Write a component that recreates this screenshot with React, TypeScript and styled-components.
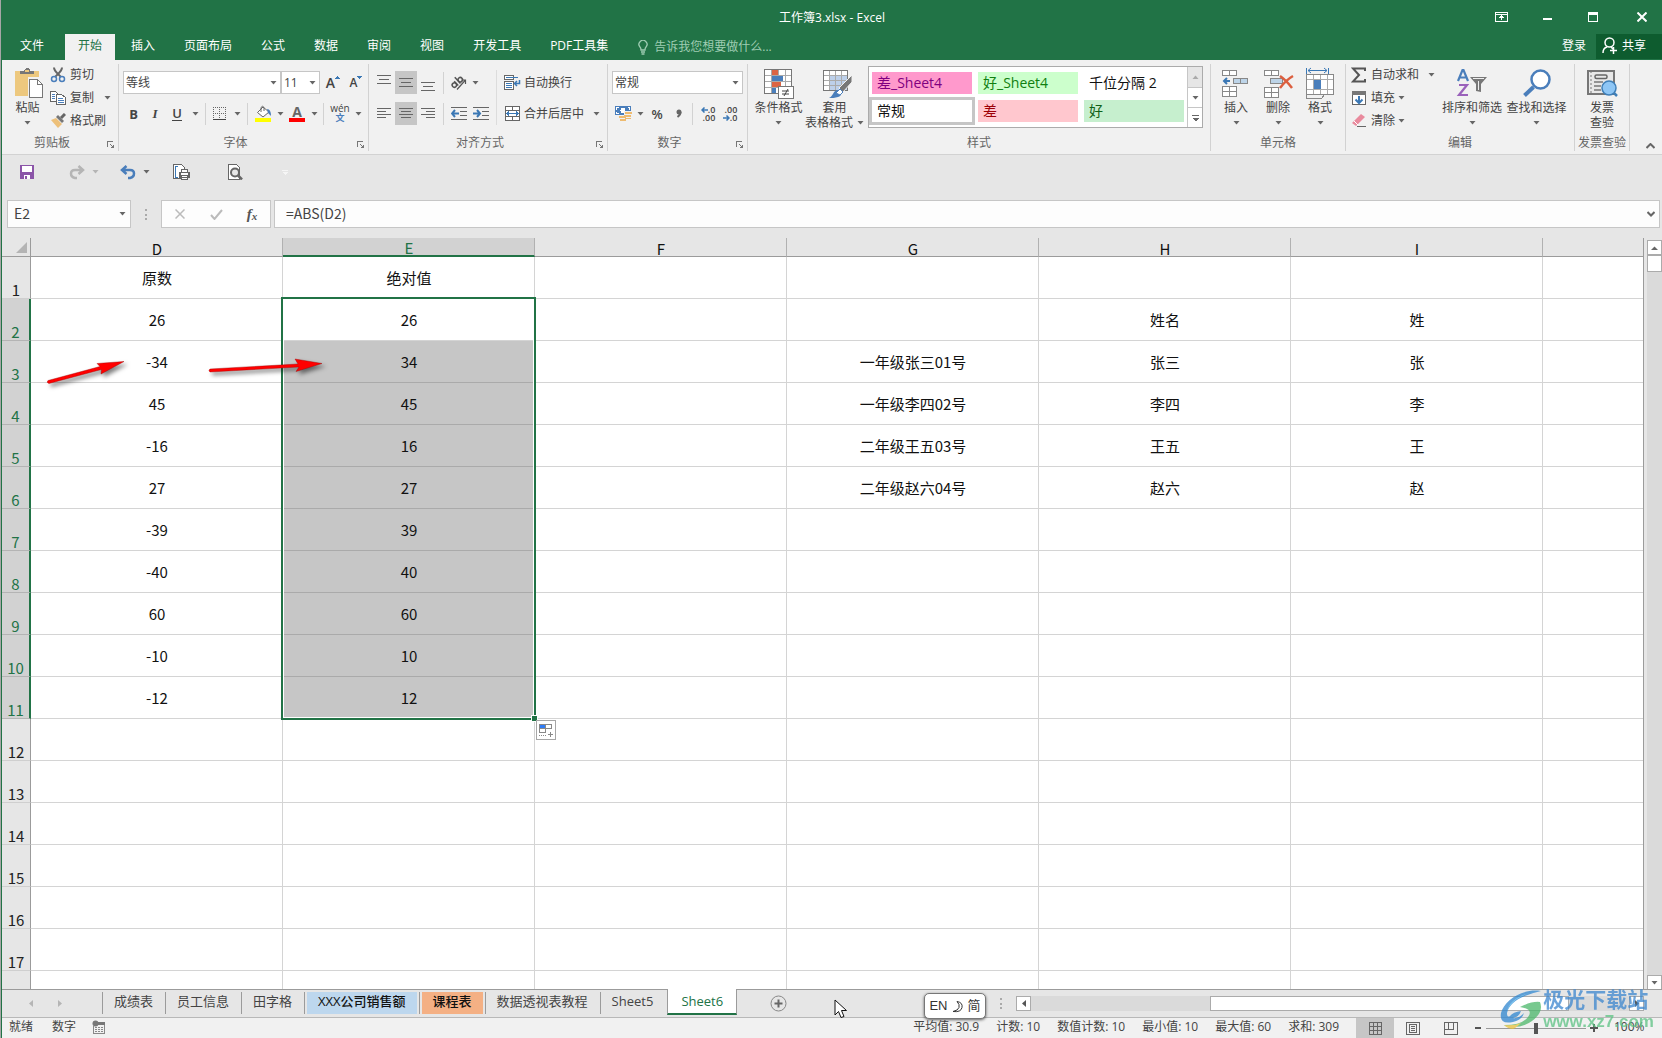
import React from "react";
import styled, { createGlobalStyle, css } from "styled-components";

const GREEN = "#217346";
const UI_FONT = '"Open Sans", "Noto Sans CJK SC", sans-serif';
const CELL_FONT = '"Noto Sans CJK SC", sans-serif';

const GlobalStyle = createGlobalStyle`
  * { box-sizing: border-box; }
  html, body, #root { height: 100%; margin: 0; }
  body { font: 12px/16px ${UI_FONT}; color: #444; overflow: hidden; }
  button, input, select { font: inherit; color: inherit; margin: 0; padding: 0; border: 0; background: none; border-radius: 0; }
  button { display: inline-flex; align-items: center; justify-content: center; white-space: nowrap; }
  svg { display: block; flex: none; }
`;

const Frame = styled.div`
  height: 100vh;
  border-left: 1px solid #a6a6a6;
`;
const Workbook = styled.div`
  height: 100%;
  display: flex;
  flex-direction: column;
  border-left: 1px solid ${GREEN};
  background: #e6e6e6;
  position: relative;
`;

/* ---------- title and tabs ---------- */
const TitleBar = styled.header`
  display: grid;
  grid-template-columns: 1fr auto 1fr;
  align-items: center;
  height: 34px;
  background: ${GREEN};
  color: #fff;
`;
const Title = styled.h1`
  grid-column: 2;
  margin: 0;
  padding-top: 2px;
  font-size: 12px;
  font-weight: 400;
`;
const WindowButtons = styled.div`
  display: flex;
  justify-content: flex-end;
`;
const WindowButton = styled.button`
  width: 46px;
  height: 32px;
  &:last-child { padding-left: 6px; }
`;
const TabBar = styled.nav`
  display: flex;
  align-items: flex-start;
  gap: 3px;
  height: 26px;
  background: ${GREEN};
  color: #fff;
`;
const RibbonTab = styled.button<{ $active?: boolean; $file?: boolean }>`
  height: 26px;
  padding: 0 ${(p) => (p.$file ? 18 : 13)}px 2px;
  ${(p) => p.$active && css`background: #f1f1f1; color: ${GREEN};`}
`;
const TellMe = styled.button`
  height: 26px;
  padding: 0 0 0 14px;
  gap: 6px;
  color: #9fcdb3;
`;
const Login = styled.button`
  height: 26px;
  margin-left: auto;
  padding: 0 7px 2px;
`;
const Share = styled.button`
  height: 25px;
  width: 66px;
  gap: 4px;
  padding: 0 10px 2px 0;
  background: #0e5c2f;
`;

/* ---------- ribbon ---------- */
const Ribbon = styled.section`
  display: flex;
  height: 95px;
  background: #f1f1f1;
  border-bottom: 1px solid #d2d2d2;
`;
const Group = styled.section<{ $w: number }>`
  display: flex;
  flex: none;
  flex-direction: column;
  width: ${(p) => p.$w}px;
  margin: 4px 0 3px;
  border-right: 1px solid #d2d2d2;
`;
const GroupBody = styled.div`
  display: flex;
  flex: 1;
  min-height: 0;
  padding: 0 4px;
`;
const GroupFooter = styled.div`
  display: flex;
  align-items: center;
  height: 16px;
  color: #666;
`;
const GroupLabel = styled.div`
  flex: 1;
  text-align: center;
  white-space: nowrap;
`;
const Launcher = styled.button`
  width: 16px;
  height: 16px;
  justify-content: flex-end;
  padding: 4px 3px 0 0;
`;
const BigButton = styled.button<{ $w: number }>`
  width: ${(p) => p.$w}px;
  flex: none;
  flex-direction: column;
  justify-content: flex-start;
  align-self: flex-start;
  padding-top: 2px;
  line-height: 15px;
`;
const BigIcon = styled.span`
  display: flex;
  align-items: center;
  justify-content: center;
  height: 34px;
`;
const BigArrow = styled.span`
  display: flex;
  align-items: center;
  height: 15px;
  gap: 4px;
`;
const Stack = styled.div<{ $w?: number }>`
  display: flex;
  flex-direction: column;
  width: ${(p) => (p.$w ? p.$w + "px" : "auto")};
`;
const SmallButton = styled.button`
  height: 23px;
  gap: 3px;
  padding-bottom: 2px;
  justify-content: flex-start;
`;
const IconSlot = styled.span<{ $w?: number }>`
  display: flex;
  justify-content: center;
  width: ${(p) => p.$w ?? 16}px;
`;
const ArrowSlot = styled.span<{ $gap: number }>`
  margin-left: ${(p) => p.$gap}px;
`;
const ToolRows = styled.div`
  display: flex;
  flex-direction: column;
  gap: 8px;
  padding-top: 7px;
`;
const ToolRow = styled.div`
  display: flex;
  align-items: center;
  height: 23px;
`;
const Tool = styled.button<{ $w: number; $on?: boolean }>`
  width: ${(p) => p.$w}px;
  height: 23px;
  flex: none;
  background: ${(p) => (p.$on ? "#c6c6c6" : "transparent")};
`;
const TextTool = styled.button`
  height: 23px;
  gap: 3px;
  white-space: nowrap;
`;
const Divider = styled.span<{ $h?: number; $m?: number }>`
  width: 1px;
  height: ${(p) => p.$h ?? 22}px;
  flex: none;
  margin: 0 ${(p) => p.$m ?? 3}px;
  background: #d2d2d2;
`;
const TallDivider = styled.span`
  width: 1px;
  height: 55px;
  margin: 6px 7px 0 4px;
  background: #dcdcdc;
`;
const Combo = styled.label<{ $w: number }>`
  display: grid;
  grid-template-columns: 1fr 14px;
  align-items: center;
  width: ${(p) => p.$w}px;
  height: 23px;
  background: #fff;
  border: 1px solid #c6c6c6;
  select {
    grid-area: 1 / 1 / 2 / 3;
    appearance: none;
    padding-left: 2px;
    height: 21px;
    outline: none;
  }
  svg { grid-area: 1 / 2; pointer-events: none; justify-self: center; }
`;
const Letter = styled.span<{ $b?: boolean; $i?: boolean; $u?: boolean }>`
  font-size: 13px;
  line-height: 14px;
  font-weight: ${(p) => (p.$b ? 700 : 600)};
  font-style: ${(p) => (p.$i ? "italic" : "normal")};
  font-family: ${(p) => (p.$i ? '"Liberation Serif", serif' : UI_FONT)};
  border-bottom: ${(p) => (p.$u ? "1px solid #444" : "0")};
`;
const FontColor = styled.span`
  width: 16px;
  height: 17px;
  border-bottom: 4px solid #f00;
  font-size: 14px;
  font-weight: 700;
  line-height: 13px;
  text-align: center;
  color: #666;
`;
const GrowShrink = styled.span<{ $s: number }>`
  font-size: ${(p) => p.$s}px;
  font-weight: 600;
  line-height: 16px;
`;
const Wen = styled.span`
  display: flex;
  flex-direction: column;
  align-items: center;
  font-size: 10px;
  line-height: 9px;
  b { font-size: 9px; line-height: 10px; color: #4a7ebb; }
`;
const Decimal = styled.span`
  display: grid;
  font-size: 9px;
  font-weight: 600;
  line-height: 8px;
  justify-items: end;
  span { display: flex; align-items: center; }
`;
const FxText = styled.i`
  font: italic 700 15px/16px "Liberation Serif", serif;
  color: #555;
  sub { font-size: 11px; line-height: 8px; vertical-align: -1px; }
`;

/* ---------- style gallery ---------- */
const Gallery = styled.div`
  display: flex;
  height: 62px;
  margin: 2px 0 0 4px;
  background: #fff;
  border: 1px solid #ababab;
`;
const Swatches = styled.div`
  display: grid;
  grid-template-columns: repeat(3, 100px);
  grid-auto-rows: 22px;
  gap: 6px;
  padding: 5px 3px;
`;
const Swatch = styled.button<{ $bg: string; $fg: string; $on?: boolean }>`
  justify-content: flex-start;
  padding: 0 5px 1px;
  font-size: 14px;
  line-height: 20px;
  background: ${(p) => p.$bg};
  color: ${(p) => p.$fg};
  box-shadow: ${(p) => (p.$on ? "0 0 0 3px #c6c6c6" : "none")};
`;
const GalleryScroll = styled.div`
  display: grid;
  grid-template-rows: 1fr 1fr 1fr;
  width: 15px;
  margin-left: auto;
  border-left: 1px solid #c6c6c6;
  button + button { border-top: 1px solid #c6c6c6; }
  button:first-child { background: #e6e6e6; }
`;
const Collapse = styled.button`
  margin: auto 4px 2px auto;
  width: 16px;
  height: 12px;
`;

/* ---------- quick access and formula ---------- */
const QuickBar = styled.div`
  display: flex;
  align-items: center;
  height: 34px;
  margin-bottom: 11px;
  padding-left: 14px;
`;
const Quick = styled.button<{ $w: number; $before?: number }>`
  width: ${(p) => p.$w}px;
  height: 24px;
  margin-left: ${(p) => p.$before ?? 0}px;
`;
const FormulaBar = styled.div`
  display: flex;
  height: 28px;
  margin: 0 2px 10px 5px;
  font: 14px/20px ${CELL_FONT};
`;
const Box = styled.div<{ $w?: number }>`
  display: flex;
  align-items: center;
  height: 28px;
  ${(p) => (p.$w ? `width: ${p.$w}px;` : "flex: 1;")}
  background: #fdfdfd;
  border: 1px solid #c6c6c6;
  input {
    flex: 1;
    min-width: 0;
    height: 26px;
    padding: 0 6px 2px;
    outline: none;
  }
`;
const FormulaBox = styled(Box)`
  margin-left: 3px;
  input { padding-left: 11px; }
`;
const Grip = styled.span`
  display: flex;
  align-items: center;
  justify-content: center;
  width: 30px;
`;
const Narrow = styled.button<{ $w: number }>`
  width: ${(p) => p.$w}px;
  height: 24px;
`;

/* ---------- sheet ---------- */
const SheetArea = styled.main`
  display: flex;
  flex: 1;
  min-height: 0;
`;
const Viewport = styled.div`
  position: relative;
  flex: 1;
  min-width: 0;
  overflow: hidden;
  border-right: 1px solid #9b9b9b;
`;
const Grid = styled.table`
  width: 100%;
  table-layout: fixed;
  border-collapse: separate;
  border-spacing: 0;
  font: 15px/20px ${CELL_FONT};
  color: #111;
  col:first-child { width: 29px; }
  col.data { width: 252px; }
`;
const Corner = styled.td`
  height: 19px;
  padding: 0;
  background: #e6e6e6;
  border-right: 1px solid #9b9b9b;
  border-bottom: 1px solid #9b9b9b;
  svg { margin: 0 0 0 auto; }
`;
const ColHead = styled.th<{ $on?: boolean }>`
  height: 19px;
  padding: 2px 0 0 1px;
  font-weight: 400;
  line-height: 15px;
  background: ${(p) => (p.$on ? "#d2d2d2" : "#e6e6e6")};
  color: ${(p) => (p.$on ? GREEN : "#111")};
  border-right: 1px solid #b1b1b1;
  border-bottom: ${(p) => (p.$on ? `2px solid ${GREEN}` : "1px solid #9b9b9b")};
  &:last-child { border-right: 0; }
`;
const RowHead = styled.th<{ $on?: boolean }>`
  height: 42px;
  padding: 0;
  vertical-align: bottom;
  font-weight: 400;
  line-height: 16px;
  background: ${(p) => (p.$on ? "#d2d2d2" : "#e6e6e6")};
  color: ${(p) => (p.$on ? GREEN : "#222")};
  border-bottom: 1px solid ${(p) => (p.$on ? "#b4b4b4" : "#cfcfcf")};
  border-right: ${(p) => (p.$on ? `2px solid ${GREEN}` : "1px solid #9b9b9b")};
`;
const Cell = styled.td<{ $fill?: boolean }>`
  position: relative;
  height: 42px;
  padding: 0 0 0 1px;
  text-align: center;
  background: ${(p) => (p.$fill ? "#c6c6c6" : "#fff")};
  border-right: 1px solid #d4d4d4;
  border-bottom: 1px solid ${(p) => (p.$fill ? "#aaa" : "#d4d4d4")};
  &:last-child { border-right: 0; }
`;
const Selection = styled.div`
  position: absolute;
  z-index: 1;
  left: -2px;
  top: -2px;
  width: 255px;
  height: 423px;
  border: 2px solid ${GREEN};
  box-shadow: inset 0 0 0 1px #fff;
`;
const FillHandle = styled.span`
  position: absolute;
  right: -4px;
  bottom: -4px;
  width: 7px;
  height: 7px;
  background: ${GREEN};
  border: 1px solid #fff;
`;
const FillOptions = styled.button`
  position: absolute;
  left: 253px;
  top: 421px;
  z-index: 2;
  width: 20px;
  height: 20px;
  background: #fff;
  border: 1px solid #a6a6a6;
`;
const ArrowLayer = styled.svg`
  position: absolute;
  left: 0;
  top: 100px;
  z-index: 3;
  filter: drop-shadow(3px 3px 2px rgba(0, 0, 0, 0.5));
`;
const VScroll = styled.div`
  display: flex;
  flex-direction: column;
  width: 15px;
  margin: 2px 0 -1px 3px;
  background: #dadada;
`;
const ScrollButton = styled.button`
  width: 15px;
  height: 15px;
  flex: none;
  background: #fff;
  border: 1px solid #ababab;
`;
const VThumb = styled.div`
  height: 17px;
  margin-bottom: auto;
  background: #fff;
  border: 1px solid #ababab;
`;

/* ---------- sheet tabs ---------- */
const SheetBar = styled.div`
  display: flex;
  height: 29px;
  border-top: 1px solid #9b9b9b;
  border-bottom: 1px solid #b8b8b8;
  font-size: 13px;
`;
const SheetNav = styled.div`
  display: flex;
  align-items: flex-start;
  width: 100px;
  flex: none;
  padding: 4px 0 0 14px;
  button { width: 29px; height: 18px; }
`;
const SheetTab = styled.button<{ $bg?: string; $active?: boolean }>`
  height: 22px;
  margin-top: 2px;
  padding: 0 12px 4px 11px;
  border-left: 1px solid #9b9b9b;
  ${(p) =>
    p.$bg &&
    css`
      padding: 0 2px;
      span { background: ${p.$bg}; color: #111; font-weight: 500; height: 22px; padding: 0 11px; line-height: 18px; }
    `}
  ${(p) =>
    p.$active &&
    css`
      height: 26px;
      margin-top: -1px;
      margin-left: 2px;
      padding: 0 13px 1px;
      background: #fff;
      color: ${GREEN};
      border-right: 1px solid #9b9b9b;
      border-bottom: 2px solid ${GREEN};
    `}
`;
const AddSheet = styled.button`
  width: 20px;
  height: 20px;
  margin: 3px 0 0 31px;
`;
const HScroll = styled.div`
  display: flex;
  align-items: center;
  width: 628px;
  height: 15px;
  margin: 6px 18px 0 auto;
  background: #dadada;
`;
const HTrack = styled.div`
  display: flex;
  flex: 1;
`;
const HThumb = styled.div`
  width: 60%;
  height: 15px;
  margin-left: 30%;
  background: #fff;
  border: 1px solid #ababab;
`;
const BarGrip = styled.span`
  margin: 8px 0 0 auto;
  & + div { margin-left: 14px; }
`;
const StatusBar = styled.footer`
  display: flex;
  align-items: flex-start;
  height: 20px;
  padding-left: 7px;
  background: #f1f1f1;
  line-height: 18px;
  white-space: nowrap;
`;
const StatusText = styled.span<{ $gap: number }>`
  margin-right: ${(p) => p.$gap}px;
`;
const StatusRight = styled.div`
  display: flex;
  height: 20px;
  margin-left: auto;
`;
const ViewButton = styled.button<{ $on?: boolean }>`
  width: 38px;
  height: 20px;
  background: ${(p) => (p.$on ? "#c6c6c6" : "transparent")};
`;
const ZoomButton = styled.button`
  width: 16px;
  height: 20px;
`;
const Slider = styled.input`
  appearance: none;
  width: 100px;
  height: 20px;
  background: linear-gradient(#999, #999) center / 100% 1px no-repeat;
  &::-webkit-slider-thumb { appearance: none; width: 4px; height: 11px; background: #555; }
`;
const Percent = styled.span`
  width: 60px;
  padding-left: 12px;
`;

/* ---------- floating items ---------- */
const ImePill = styled.div`
  position: absolute;
  left: 922px;
  bottom: 19px;
  z-index: 4;
  display: flex;
  align-items: center;
  justify-content: center;
  gap: 4px;
  width: 62px;
  height: 26px;
  border: 1px solid #777;
  border-radius: 5px;
  background: #fff;
  box-shadow: 0 1px 3px rgba(0, 0, 0, 0.6);
  font: 13px/16px "Liberation Sans", "Noto Sans CJK SC", sans-serif;
  color: #333;
`;
const Pointer = styled.svg`
  position: absolute;
  left: 832px;
  bottom: 19px;
  z-index: 4;
`;
const Watermark = styled.div`
  position: absolute;
  right: 8px;
  bottom: 6px;
  z-index: 5;
  display: flex;
  align-items: center;
  opacity: 0.75;
  font-family: "Liberation Sans", "Noto Sans CJK SC", sans-serif;
`;
const MarkText = styled.div`
  font-size: 21px;
  line-height: 24px;
  font-weight: 700;
  color: #3c86cf;
`;
const MarkUrl = styled.div`
  font-size: 17px;
  line-height: 20px;
  font-weight: 700;
  color: #5cc283;
`;

/* ---------- icons ---------- */
type P = { children: React.ReactNode; w?: number; h?: number; crisp?: boolean };
const Svg = ({ children, w = 16, h = 16, crisp = true }: P) => (
  <svg width={w} height={h} viewBox={`0 0 ${w} ${h}`} fill="none" stroke="#666" shapeRendering={crisp ? "crispEdges" : "auto"} aria-hidden="true">
    {children}
  </svg>
);
const Down = ({ color = "#666" }: { color?: string }) => (
  <svg width="7" height="4" viewBox="0 0 7 4" aria-hidden="true"><path d="M0.5 0h6l-3 3.5z" fill={color} /></svg>
);
const LaunchIcon = () => (
  <Svg w={8} h={8}><path d="M.5 6V.5H6" stroke="#777" /><path d="M3 3l3 3" stroke="#777" shapeRendering="auto" /><path d="M7 3v4H3z" fill="#777" stroke="none" /></Svg>
);
const Lines = ({ widths, top }: { widths: number[]; top: number }) => (
  <Svg w={14} h={17}>
    {widths.map((w, i) => {
      const x = w < 0 ? 14 + w : w === 10 ? 2 : 0;
      return <path key={i} d={`M${x} ${top + i * (widths.length === 3 ? 4 : 3) + 0.5}h${Math.abs(w)}`} />;
    })}
  </Svg>
);
const PasteIcon = () => (
  <Svg w={32} h={32}>
    <path d="M3 4h24v25H3z" fill="#edc87e" stroke="none" />
    <path d="M8 7V4h4V3q3-4 6 0v1h4v3z" fill="#777" stroke="none" />
    <path d="M13 3h4v2h-4z" fill="#edc87e" stroke="none" />
    <path d="M16 10h10l6 6v16H16z" fill="#f1f1f1" stroke="none" />
    <path d="M17.500 12.500h8l5 5v13h-13z" fill="#fff" stroke="#777" />
    <path d="M25.500 12.500v5h5" stroke="#777" />
  </Svg>
);
const CutIcon = () => (
  <Svg crisp={false}><path d="M4 .5c0 4 5 7 7 9.500M12 .5c0 4-5 7-7 9.500" stroke="#666" strokeWidth="2" /><circle cx="4" cy="12" r="2.500" stroke="#4a7ebb" strokeWidth="1.500" /><circle cx="12" cy="12" r="2.500" stroke="#4a7ebb" strokeWidth="1.500" /></Svg>
);
const CopyIcon = () => (
  <Svg><path d="M.5 1.500h5l2 2v8h-7z" fill="#fff" /><path d="M2 4.500h3M2 6.500h3M2 8.500h3" stroke="#4a7ebb" /><path d="M6.500 4.500h5l4 3v7h-9z" fill="#fff" /><path d="M8 8.500h5M8 10.500h6M8 12.500h6" stroke="#4a7ebb" /></Svg>
);
const BrushIcon = () => (
  <Svg crisp={false}><path d="M1 7l5-2 6 6-4 4z" fill="#edc07a" stroke="none" /><path d="M6 4l2-2 6 6-2 2z" fill="#777" stroke="none" /><path d="M11 5l4-4" stroke="#666" strokeWidth="3" /></Svg>
);
const BorderIcon = () => (
  <Svg w={14} h={14}><path d="M.5 0v13M6.500 0v13M12.500 0v13M0 .5h13M0 6.500h13" stroke="#666" strokeDasharray="1 1" /><path d="M0 12.500h13" stroke="#444" /></Svg>
);
const FillIcon = () => (
  <Svg w={17} h={17} crisp={false}><path d="M8 2L2.500 7.500 8 12l6-5z" fill="#fff" stroke="#666" /><path d="M6 7V2.500q1.500-2.500 3 0V6" stroke="#666" /><path d="M12 4q4 0 4 7l-3-3z" fill="#4a7ebb" stroke="none" /><path d="M0 13h16v4H0z" fill="#ff0" stroke="none" /></Svg>
);
const SmallArrow = ({ dir }: { dir: "l" | "r" }) => (
  <Svg w={7} h={6} crisp={false}><path d={dir === "l" ? "M7 3H1M3.500 .5L1 3l2.500 2.500" : "M0 3h6M3.500 .5L6 3 3.500 5.500"} stroke="#3b78b5" strokeWidth="1.500" /></Svg>
);
const OrientIcon = () => (
  <Svg w={18} h={17} crisp={false}>
    <g transform="rotate(-42 7 8)" stroke="#555" strokeWidth="1.500"><circle cx="3" cy="8.500" r="2.200" /><path d="M5.500 5.500v6" /><path d="M8.500 3v8.500" /><circle cx="11" cy="8.500" r="2.200" /></g>
    <path d="M7 15.500L15.500 6M11.500 6h4v4" stroke="#555" strokeWidth="1.200" />
  </Svg>
);
const IndentIcon = ({ dir }: { dir: "l" | "r" }) => (
  <Svg w={17} h={14}><path d="M0 .5h16M9 4.500h7M9 8.500h7M0 12.500h16" /><path d={dir === "l" ? "M8 6.500H1M4 3L1 6.500 4 10" : "M0 6.500h7M4 3l3 3.500L4 10"} stroke="#3b78b5" strokeWidth="2" shapeRendering="auto" /></Svg>
);
const WrapIcon = () => (
  <Svg w={17} h={16}><path d="M.5.500h9v4h-9zM.5 6.500h9v8h-9z" fill="#fff" /><path d="M2 2.500h12M2 8.500h6M2 10.500h6M2 12.500h6" stroke="#3b78b5" /><path d="M15.500 5v3.500H11M13 6l-2.500 2.500L13 11" stroke="#3b78b5" strokeWidth="1.500" shapeRendering="auto" /></Svg>
);
const MergeIcon = () => (
  <Svg><path d="M.5.500h14v14H.5zM.5 4.500h14M.5 10.500h14M7.500.500v4M7.500 10.500v4" fill="#fff" /><path d="M2 7.500h11M4 5.500l-2 2 2 2M11 5.500l2 2-2 2" stroke="#3b78b5" /></Svg>
);
const MoneyIcon = () => (
  <Svg w={18} h={17}><path d="M0 1h16v9H0z" fill="#4a7ebb" stroke="none" /><path d="M1.500 4.500v-2h2M12.500 2.500h2v2M1.500 6.500v2h2" stroke="#fff" /><circle cx="8" cy="5.500" r="2.500" fill="#fff" stroke="none" /><path d="M9 6h8v10H4v-6h5z" fill="#f1f1f1" stroke="none" /><path d="M10 7h7v2h-7zM9 10h7v2H9zM4 11h7v2H4zM5 14h6v2H5zM10 13h6v1h-6z" fill="#eebb70" stroke="none" /></Svg>
);
const CondIcon = () => (
  <Svg w={32} h={32}><path d="M1.500 2.500h27v24h-27z" fill="#fff" stroke="#777" /><path d="M8.500 3v23M15.500 3v23M22.500 3v23M2 8.500h26M2 14.500h26M2 20.500h26" stroke="#aaa" /><path d="M9 3h6v5H9zM9 15h9v5H9z" fill="#dc6544" stroke="none" /><path d="M9 9h11v5H9zM9 21h4v5H9z" fill="#4a7ebb" stroke="none" /><path d="M15.500 19.500h15v12h-15z" fill="#fff" stroke="#777" /><path d="M19 24h7M19 27h7M25 22l-4 7" stroke="#444" shapeRendering="auto" /></Svg>
);
const TableFormatIcon = () => (
  <Svg w={36} h={32}><g transform="translate(4 0)"><path d="M2.500 3.500h24v20h-24z" fill="#fff" stroke="#777" /><path d="M9 9h18v15H9z" fill="#bdd0ea" stroke="none" /><path d="M8.500 4v19M14.500 4v19M20.500 4v19M3 8.500h23M3 13.500h23M3 18.500h23" stroke="#aaa" /><path d="M2.500 3.500h24v20h-24z" stroke="#777" /><g shapeRendering="auto"><path d="M31 8v7L22 25l-4-4z" fill="#777" stroke="#f1f1f1" /><path d="M8 31c4-1 4-8 9-8 5 1 4 6 0 7-3 1-6 1-9 1z" fill="#4a7ebb" stroke="none" /><path d="M15 26l4-4 3 3-3 3z" fill="#fff" stroke="#4a7ebb" /></g></g></Svg>
);
const InsertIcon = () => (
  <Svg w={30} h={30}><path d="M1.500 2.500h14v5h-14zM8.500 2.500v5M1.500 18.500h14v10h-14zM8.500 18.500v10M1.500 23.500h14" fill="#fff" stroke="#888" /><path d="M12.500 10.500h14v5h-14zM19.500 10.500v5" fill="#bdd4e8" stroke="#888" /><path d="M9 13H3M6 10l-3 3 3 3" stroke="#3b78b5" strokeWidth="2" shapeRendering="auto" /></Svg>
);
const DeleteIcon = () => (
  <Svg w={32} h={30}><path d="M2.500 2.500h14v5h-14zM9.500 2.500v5M2.500 19.500h14v10h-14zM9.500 19.500v10M2.500 24.500h14" fill="#fff" stroke="#888" /><path d="M8.500 10.500h12v5h-12z" fill="#bdd4e8" stroke="#888" /><path d="M18 8q6 4 12 12M31 8q-7 4-13 12" stroke="#dc5f3f" strokeWidth="2.500" shapeRendering="auto" /></Svg>
);
const FormatIcon = () => (
  <Svg w={30} h={32}><path d="M1.500 7.500h27v20h-27z" fill="#fff" stroke="#888" /><path d="M8.500 7v20M15.500 7v20M22.500 7v20M2 12.500h26M2 22.500h26" stroke="#aaa" /><path d="M1.500 7.500h27v20h-9l-3 4h-15z" stroke="#888" /><path d="M9 13h7v9H9z" fill="#4a7ebb" stroke="none" /><path d="M1.500 1v6M23.500 1v6" stroke="#3b78b5" /><path d="M3 3.500h19M6 1L3 3.500 6 6M19 1l3 2.500L19 6" stroke="#3b78b5" shapeRendering="auto" /></Svg>
);
const SumIcon = () => (
  <Svg crisp={false}><path d="M14 4V1.500H2l6 6.500-6 6.500h12V12" stroke="#555" strokeWidth="2" /></Svg>
);
const FillDownIcon = () => (
  <Svg><path d="M1.500 1.500h13v13h-13z" fill="#fff" /><path d="M1 1h14v4H1z" fill="#777" stroke="none" /><path d="M8 6v7M4.500 9.500L8 13l3.500-3.500" stroke="#3b78b5" strokeWidth="2" shapeRendering="auto" /></Svg>
);
const EraserIcon = () => (
  <Svg crisp={false}><path d="M1 10l9-9 4 3-9 9z" fill="#e98a9d" stroke="none" /><path d="M3 8l4 4" stroke="#fff" /><path d="M6 13.500h9" stroke="#666" /></Svg>
);
const SortIcon = () => (
  <Svg w={32} h={32} crisp={false}><path d="M2 14L6.500 3h1L12 14M3.500 10.500h7" stroke="#4a7ebb" strokeWidth="2.200" /><path d="M3 18h8L3 28h9" stroke="#9a62bb" strokeWidth="2.200" /><path d="M14 10h17l-6 7v8l-5-1v-7z" fill="#777" stroke="none" /><path d="M17 11.500h11M22.500 14v9" stroke="#eee" /></Svg>
);
const FindIcon = () => (
  <Svg w={30} h={30} crisp={false}><circle cx="18.500" cy="11.500" r="9" fill="#fff" stroke="#4a7ebb" strokeWidth="2.500" /><path d="M11.500 19L2.500 27.500" stroke="#4a7ebb" strokeWidth="4" /></Svg>
);
const InvoiceIcon = () => (
  <Svg w={32} h={30} crisp={false}><path d="M2 3h26v23H2z" fill="#e8e8e8" stroke="#777" strokeWidth="2" /><path d="M5 3v23" stroke="#777" strokeDasharray="2 2" /><rect x="9" y="7" width="12" height="3.500" rx="1.500" stroke="#666" strokeWidth="1.500" /><path d="M8 14h9M8 18h7M8 22h7" stroke="#777" strokeWidth="1.500" /><circle cx="23" cy="20" r="7" fill="#8ec6f5" stroke="#3f7fb8" strokeWidth="1.500" /><path d="M28 25l3 3" stroke="#3f7fb8" strokeWidth="2.500" /></Svg>
);
const SaveIcon = () => (
  <Svg><path d="M1 1h14v14H1z" fill="#8b55a8" stroke="none" /><path d="M3 2h10v6H3zM5 11h6v4H5z" fill="#fff" stroke="none" /><path d="M6 12h2v3H6z" fill="#8b55a8" stroke="none" /></Svg>
);
const UndoIcon = ({ flip }: { flip?: boolean }) => (
  <Svg w={16} h={15} crisp={false}><g transform={flip ? "translate(16 0) scale(-1 1)" : undefined} stroke={flip ? "#b5b5b5" : "#4a7ebb"} strokeWidth="2.500"><path d="M6.500 1L2 5l4.500 4M2 5h8q4 0 4 3.500T10 13H8" /></g></Svg>
);
const PrintIcon = () => (
  <Svg w={18} h={17}><path d="M.5.500h8l3 3v11H.5z" fill="#fff" /><path d="M5 2.500H2.500v11H5" stroke="#3b78b5" /><path d="M6.500 8.500h10v5h-10zM8.500 5.500h6v3h-6zM8.500 11.500h6v4h-6z" fill="#fff" strokeWidth="1" /><path d="M6 9h2v4H6zM15 9h2v4h-2z" fill="#666" stroke="none" /></Svg>
);
const PreviewIcon = () => (
  <Svg><path d="M1.500.500h8l3 3v12h-11z" fill="#fff" /><g shapeRendering="auto"><circle cx="8" cy="8.500" r="4" fill="#e6e6e6" strokeWidth="2" /><path d="M11 11.500l4 4" strokeWidth="2.500" /></g></Svg>
);

/* ---------- data ---------- */
const tabs = ["文件", "开始", "插入", "页面布局", "公式", "数据", "审阅", "视图", "开发工具", "PDF工具集"];
const columns = ["D", "E", "F", "G", "H", "I"];
const rows: string[][] = [
  ["原数", "绝对值", "", "", "", ""],
  ["26", "26", "", "", "姓名", "姓"],
  ["-34", "34", "", "一年级张三01号", "张三", "张"],
  ["45", "45", "", "一年级李四02号", "李四", "李"],
  ["-16", "16", "", "二年级王五03号", "王五", "王"],
  ["27", "27", "", "二年级赵六04号", "赵六", "赵"],
  ["-39", "39"], ["-40", "40"], ["60", "60"], ["-10", "10"], ["-12", "12"],
  [], [], [], [], [], [], [],
];
const swatches = [
  { name: "差_Sheet4", bg: "#ff99cc", fg: "#800080" },
  { name: "好_Sheet4", bg: "#ccffcc", fg: "#108010" },
  { name: "千位分隔 2", bg: "#fff", fg: "#111" },
  { name: "常规", bg: "#fff", fg: "#111", on: true },
  { name: "差", bg: "#ffc7ce", fg: "#9c0006" },
  { name: "好", bg: "#c6efce", fg: "#106118" },
];
const sheets = [
  { name: "成绩表" }, { name: "员工信息" }, { name: "田字格" },
  { name: "XXX公司销售额", bg: "#bdd7ee" }, { name: "课程表", bg: "#f4b084" },
  { name: "数据透视表教程" }, { name: "Sheet5" }, { name: "Sheet6", active: true },
];
const stats = ["平均值: 30.9", "计数: 10", "数值计数: 10", "最小值: 10", "最大值: 60", "求和: 309"];

const RibbonGroup = ({ w, label, launch, children }: { w: number; label: string; launch?: boolean; children: React.ReactNode }) => (
  <Group $w={w} aria-label={label}>
    <GroupBody>{children}</GroupBody>
    <GroupFooter>
      <GroupLabel>{label}</GroupLabel>
      {launch && <Launcher aria-label={`${label}设置`}><LaunchIcon /></Launcher>}
    </GroupFooter>
  </Group>
);
const Big = ({ w, icon, label }: { w: number; icon: React.ReactNode; label: string }) => (
  <BigButton $w={w}><BigIcon>{icon}</BigIcon>{label}<BigArrow><Down /></BigArrow></BigButton>
);

export default function App() {
  return (
    <Frame>
      <GlobalStyle />
      <Workbook>
        <TitleBar>
          <Title>工作簿3.xlsx - Excel</Title>
          <WindowButtons>
            <WindowButton aria-label="功能区显示选项"><Svg w={13} h={10}><path d="M.5.500h12v9H.5zM.5 2.500h12" stroke="#fff" /><path d="M6.500 8V4M4.500 6l2-2 2 2" stroke="#fff" /></Svg></WindowButton>
            <WindowButton aria-label="最小化"><Svg w={9} h={10}><path d="M0 7h9" stroke="#fff" strokeWidth="2" /></Svg></WindowButton>
            <WindowButton aria-label="最大化"><Svg w={10} h={10}><path d="M.5.500h9v9H.5zM0 1.500h10" stroke="#fff" /><path d="M0 0h10v3H0z" fill="#fff" stroke="none" /></Svg></WindowButton>
            <WindowButton aria-label="关闭"><Svg w={10} h={10} crisp={false}><path d="M.5.500l9 9M9.500.500l-9 9" stroke="#fff" strokeWidth="2" /></Svg></WindowButton>
          </WindowButtons>
        </TitleBar>
        <TabBar>
          {tabs.map((t, i) => <RibbonTab key={t} $file={i === 0} $active={i === 1}>{t}</RibbonTab>)}
          <TellMe>
            <Svg w={10} h={15} crisp={false}><path d="M3 10Q3 8 2 7a4 4 0 1 1 6 0Q7 8 7 10zM3 12h4M3.500 14h3" stroke="#9fcdb3" strokeWidth="1.300" /></Svg>
            告诉我您想要做什么...
          </TellMe>
          <Login>登录</Login>
          <Share>
            <Svg w={16} h={17} crisp={false}><circle cx="7.500" cy="5.500" r="4.500" stroke="#fff" strokeWidth="1.500" /><path d="M1 16q0-5 4-6M9 10l2 2M8 13.500h7M11.500 10v7" stroke="#fff" strokeWidth="1.500" /></Svg>
            共享
          </Share>
        </TabBar>

        <Ribbon>
          <RibbonGroup w={117} label="剪贴板" launch>
            <Big w={43} icon={<PasteIcon />} label="粘贴" />
            <Stack>
              <SmallButton><IconSlot $w={18}><CutIcon /></IconSlot>剪切</SmallButton>
              <SmallButton><IconSlot $w={18}><CopyIcon /></IconSlot>复制<ArrowSlot $gap={7}><Down /></ArrowSlot></SmallButton>
              <SmallButton><IconSlot $w={18}><BrushIcon /></IconSlot>格式刷</SmallButton>
            </Stack>
          </RibbonGroup>

          <RibbonGroup w={250} label="字体" launch>
            <ToolRows>
              <ToolRow>
                <Combo $w={158}><select aria-label="字体"><option>等线</option></select><Down /></Combo>
                <Combo $w={39}><select aria-label="字号"><option>11</option></select><Down /></Combo>
                <Tool $w={26} aria-label="增大字号"><GrowShrink $s={14}>A</GrowShrink><Svg w={5} h={14}><path d="M0 3h5L2.500 0z" fill="#3b78b5" stroke="none" /></Svg></Tool>
                <Tool $w={20} aria-label="减小字号"><GrowShrink $s={12}>A</GrowShrink><Svg w={5} h={14}><path d="M0 0h5L2.500 3z" fill="#3b78b5" stroke="none" /></Svg></Tool>
              </ToolRow>
              <ToolRow>
                <Tool $w={21} aria-label="加粗"><Letter $b>B</Letter></Tool>
                <Tool $w={22} aria-label="倾斜"><Letter $i>I</Letter></Tool>
                <Tool $w={22} aria-label="下划线"><Letter $u>U</Letter></Tool>
                <Tool $w={14} aria-label="下划线选项"><Down /></Tool>
                <Divider />
                <Tool $w={22} aria-label="边框"><BorderIcon /></Tool>
                <Tool $w={12} aria-label="边框选项"><Down /></Tool>
                <Divider $m={4} />
                <Tool $w={22} aria-label="填充颜色"><FillIcon /></Tool>
                <Tool $w={12} aria-label="填充颜色选项"><Down /></Tool>
                <Tool $w={22} aria-label="字体颜色"><FontColor>A</FontColor></Tool>
                <Tool $w={12} aria-label="字体颜色选项"><Down /></Tool>
                <Divider />
                <Tool $w={26} aria-label="拼音"><Wen>wén<b>文</b></Wen></Tool>
                <Tool $w={10} aria-label="拼音选项"><Down /></Tool>
              </ToolRow>
            </ToolRows>
          </RibbonGroup>

          <RibbonGroup w={239} label="对齐方式" launch>
            <ToolRows>
              <ToolRow>
                <Tool $w={22} aria-label="顶端对齐"><Lines widths={[14, 10, 14]} top={1} /></Tool>
                <Tool $w={22} $on aria-label="垂直居中"><Lines widths={[14, 10, 14]} top={4} /></Tool>
                <Tool $w={22} aria-label="底端对齐"><Lines widths={[14, 10, 14]} top={8} /></Tool>
                <Divider $m={4} />
                <Tool $w={22} aria-label="方向"><OrientIcon /></Tool>
                <Tool $w={10} aria-label="方向选项"><Down /></Tool>
              </ToolRow>
              <ToolRow>
                <Tool $w={22} aria-label="左对齐"><Lines widths={[14, 9, 14, 9]} top={3} /></Tool>
                <Tool $w={22} $on aria-label="居中"><Lines widths={[14, 10, 14, 10]} top={3} /></Tool>
                <Tool $w={22} aria-label="右对齐"><Lines widths={[14, -9, 14, -9]} top={3} /></Tool>
                <Divider $m={4} />
                <Tool $w={22} aria-label="减少缩进量"><IndentIcon dir="l" /></Tool>
                <Tool $w={22} aria-label="增加缩进量"><IndentIcon dir="r" /></Tool>
              </ToolRow>
            </ToolRows>
            <TallDivider />
            <ToolRows>
              <ToolRow><TextTool><WrapIcon />自动换行</TextTool></ToolRow>
              <ToolRow><TextTool><IconSlot $w={17}><MergeIcon /></IconSlot>合并后居中<ArrowSlot $gap={6}><Down /></ArrowSlot></TextTool></ToolRow>
            </ToolRows>
          </RibbonGroup>

          <RibbonGroup w={140} label="数字" launch>
            <ToolRows>
              <ToolRow><Combo $w={131}><select aria-label="数字格式"><option>常规</option></select><Down /></Combo></ToolRow>
              <ToolRow>
                <Tool $w={24} aria-label="会计数字格式"><MoneyIcon /></Tool>
                <Tool $w={8} aria-label="货币选项"><Down /></Tool>
                <Tool $w={26} aria-label="百分比样式"><Letter>%</Letter></Tool>
                <Tool $w={18} aria-label="千位分隔样式"><Svg w={8} h={10} crisp={false}><circle cx="4" cy="3" r="2.500" fill="#666" stroke="none" /><path d="M5.500 3q0 3-3 5" strokeWidth="2" /></Svg></Tool>
                <Divider $m={4} />
                <Tool $w={22} aria-label="增加小数位数"><Decimal><span><SmallArrow dir="l" />.0</span><span>.00</span></Decimal></Tool>
                <Tool $w={22} aria-label="减少小数位数"><Decimal><span>.00</span><span><SmallArrow dir="r" />.0</span></Decimal></Tool>
              </ToolRow>
            </ToolRows>
          </RibbonGroup>

          <RibbonGroup w={463} label="样式">
            <Big w={53} icon={<CondIcon />} label="条件格式" />
            <BigButton $w={59}>
              <BigIcon><TableFormatIcon /></BigIcon>套用
              <BigArrow>表格格式<Down /></BigArrow>
            </BigButton>
            <Gallery>
              <Swatches>
                {swatches.map((s) => <Swatch key={s.name} $bg={s.bg} $fg={s.fg} $on={s.on}>{s.name}</Swatch>)}
              </Swatches>
              <GalleryScroll>
                <button aria-label="上一行"><svg width="7" height="4"><path d="M.5 4h6l-3-3.500z" fill="#aaa" /></svg></button>
                <button aria-label="下一行"><Down /></button>
                <button aria-label="其他样式"><Svg w={7} h={8}><path d="M0 1.500h7" /><path d="M0 4h7L3.500 7.500z" fill="#666" stroke="none" /></Svg></button>
              </GalleryScroll>
            </Gallery>
          </RibbonGroup>

          <RibbonGroup w={135} label="单元格">
            <Big w={42} icon={<InsertIcon />} label="插入" />
            <Big w={42} icon={<DeleteIcon />} label="删除" />
            <Big w={42} icon={<FormatIcon />} label="格式" />
          </RibbonGroup>

          <RibbonGroup w={229} label="编辑">
            <Stack $w={90}>
              <SmallButton><IconSlot $w={18}><SumIcon /></IconSlot>自动求和<ArrowSlot $gap={6}><Down /></ArrowSlot></SmallButton>
              <SmallButton><IconSlot $w={18}><FillDownIcon /></IconSlot>填充<Down /></SmallButton>
              <SmallButton><IconSlot $w={18}><EraserIcon /></IconSlot>清除<Down /></SmallButton>
            </Stack>
            <Big w={64} icon={<SortIcon />} label="排序和筛选" />
            <Big w={65} icon={<FindIcon />} label="查找和选择" />
          </RibbonGroup>

          <RibbonGroup w={55} label="发票查验">
            <BigButton $w={46}><BigIcon><InvoiceIcon /></BigIcon>发票<span>查验</span></BigButton>
          </RibbonGroup>
          <Collapse aria-label="折叠功能区"><Svg w={9} h={6} crisp={false}><path d="M.5 5l4-4 4 4" strokeWidth="2" /></Svg></Collapse>
        </Ribbon>

        <QuickBar>
          <Quick $w={22} aria-label="保存"><SaveIcon /></Quick>
          <Quick $w={26} $before={26} aria-label="恢复"><UndoIcon flip /></Quick>
          <Quick $w={10} aria-label="恢复选项"><Down color="#b5b5b5" /></Quick>
          <Quick $w={26} $before={15} aria-label="撤消"><UndoIcon /></Quick>
          <Quick $w={10} aria-label="撤消选项"><Down /></Quick>
          <Quick $w={24} $before={19} aria-label="快速打印"><PrintIcon /></Quick>
          <Quick $w={24} $before={29} aria-label="打印预览"><PreviewIcon /></Quick>
          <Quick $w={20} $before={28} aria-label="自定义快速访问工具栏"><Svg w={6} h={7}><path d="M0 1.500h6" stroke="#f6f6f6" /><path d="M0 3h6L3 6z" fill="#f6f6f6" stroke="none" /></Svg></Quick>
        </QuickBar>

        <FormulaBar>
          <Box $w={124}><input aria-label="名称框" defaultValue="E2" /><Narrow $w={16} aria-label="名称列表"><Down /></Narrow></Box>
          <Grip><Svg w={2} h={11}><path d="M0 1h2M0 5.500h2M0 10h2" stroke="#aaa" strokeWidth="2" /></Svg></Grip>
          <Box $w={110}>
            <Narrow $w={36} aria-label="取消"><Svg w={10} h={10} crisp={false}><path d="M.5.500l9 9M9.500.500l-9 9" stroke="#bbb" strokeWidth="1.500" /></Svg></Narrow>
            <Narrow $w={36} aria-label="输入"><Svg w={13} h={11} crisp={false}><path d="M1 6l3.500 4L12 1" stroke="#bbb" strokeWidth="2" /></Svg></Narrow>
            <Narrow $w={36} aria-label="插入函数"><FxText>f<sub>x</sub></FxText></Narrow>
          </Box>
          <FormulaBox><input aria-label="编辑栏" defaultValue="=ABS(D2)" /><Narrow $w={16} aria-label="展开编辑栏"><Svg w={8} h={6} crisp={false}><path d="M.5 1L4 4.500 7.500 1" strokeWidth="2" /></Svg></Narrow></FormulaBox>
        </FormulaBar>

        <SheetArea>
          <Viewport>
            <Grid>
              <colgroup><col />{columns.map((c) => <col key={c} className="data" />)}<col /></colgroup>
              <thead>
                <tr>
                  <Corner><Svg w={14} h={13} crisp={false}><path d="M11 1v11H0z" fill="#b4b4b4" stroke="none" /></Svg></Corner>
                  {columns.map((c) => <ColHead key={c} scope="col" $on={c === "E"}>{c}</ColHead>)}
                  <ColHead />
                </tr>
              </thead>
              <tbody>
                {rows.map((r, i) => (
                  <tr key={i}>
                    <RowHead scope="row" $on={i >= 1 && i <= 10}>{i + 1}</RowHead>
                    {columns.map((c, j) => (
                      <Cell key={c} $fill={c === "E" && i >= 2 && i <= 10}>
                        {r[j]}
                        {c === "E" && i === 1 && (
                          <>
                            <Selection><FillHandle /></Selection>
                            <FillOptions aria-label="自动填充选项"><Svg w={14} h={14}><path d="M.5 1.500h12v4H.5zM.5 5.500h6v4h-6zM6.500 1.500v4" stroke="#888" /><path d="M1 2h5v3H1z" fill="#2f7cf6" stroke="none" /><path d="M0 12.500h7" stroke="#888" strokeDasharray="1 1" /><path d="M9 11h5M11.500 8.500v5" stroke="#888" /></Svg></FillOptions>
                          </>
                        )}
                      </Cell>
                    ))}
                    <Cell />
                  </tr>
                ))}
              </tbody>
            </Grid>
            <ArrowLayer width="340" height="60" viewBox="0 0 340 60" aria-hidden="true">
              <g stroke="#900" strokeWidth="0.400" fill="#f00">
                <path d="M46 42.500L98 28.500L95 25.500L122 23.500L99 36L99.500 31.500L47 45.500Q44 44.500 46 42.500z" />
                <path d="M208 31L296 26L293 21L320 25.500L294 33.500L297 29L208 34Q206 32.500 208 31z" />
              </g>
            </ArrowLayer>
          </Viewport>
          <VScroll>
            <ScrollButton aria-label="向上滚动"><svg width="7" height="4"><path d="M0 4h7L3.500.500z" fill="#666" /></svg></ScrollButton>
            <VThumb />
            <ScrollButton aria-label="向下滚动"><Down /></ScrollButton>
          </VScroll>
        </SheetArea>

        <SheetBar>
          <SheetNav>
            <button aria-label="上一个工作表"><svg width="4" height="7"><path d="M4 0v7L0 3.500z" fill="#b5b5b5" /></svg></button>
            <button aria-label="下一个工作表"><svg width="4" height="7"><path d="M0 0v7l4-3.500z" fill="#b5b5b5" /></svg></button>
          </SheetNav>
          {sheets.map((s) => <SheetTab key={s.name} $bg={s.bg} $active={s.active}><span>{s.name}</span></SheetTab>)}
          <AddSheet aria-label="新工作表"><Svg w={17} h={17} crisp={false}><circle cx="8.500" cy="8.500" r="7.500" stroke="#888" /><path d="M4.500 8.500h8M8.500 4.500v8" strokeWidth="2" /></Svg></AddSheet>
          <BarGrip><Svg w={2} h={11}><path d="M0 1h2M0 5.500h2M0 10h2" stroke="#aaa" strokeWidth="2" /></Svg></BarGrip>
          <HScroll>
            <ScrollButton aria-label="向左滚动"><svg width="4" height="7"><path d="M4 0v7L0 3.500z" fill="#555" /></svg></ScrollButton>
            <HTrack><HThumb /></HTrack>
            <ScrollButton aria-label="向右滚动"><svg width="4" height="7"><path d="M0 0v7l4-3.500z" fill="#555" /></svg></ScrollButton>
          </HScroll>
        </SheetBar>

        <StatusBar>
          <StatusText $gap={19}>就绪</StatusText>
          <StatusText $gap={16}>数字</StatusText>
          <Svg w={14} h={17}><path d="M1.500 8v7.500h11v-11H7" stroke="#888" /><path d="M6 4h7v3H6z" fill="#777" stroke="none" /><circle cx="3.500" cy="5.500" r="3" fill="#777" stroke="none" shapeRendering="auto" /><path d="M3 9.500h8M3 11.500h8M3 13.500h8" stroke="#888" strokeDasharray="2 1" /></Svg>
          <StatusRight>
            {stats.map((s) => <StatusText key={s} $gap={17}>{s}</StatusText>)}
            <ViewButton $on aria-label="普通"><Svg w={13} h={13}><path d="M.5.500h12v12H.5zM4.500 0v13M8.500 0v13M0 4.500h13M0 8.500h13" stroke="#666" /></Svg></ViewButton>
            <ViewButton aria-label="页面布局"><Svg w={14} h={13}><path d="M.5.500h13v12H.5zM3.500 2.500h7v8h-7zM5 4.500h4M5 6.500h4M5 8.500h4" /></Svg></ViewButton>
            <ViewButton aria-label="分页预览"><Svg w={14} h={13}><path d="M.5.500h13v12H.5zM4.500 0v7.500M9.500 0v7.500M0 7.500h9" /></Svg></ViewButton>
            <ZoomButton aria-label="缩小"><Svg w={6} h={6}><path d="M0 3h6" strokeWidth="2" stroke="#555" /></Svg></ZoomButton>
            <Slider type="range" aria-label="显示比例" min={0} max={100} defaultValue={50} />
            <ZoomButton aria-label="放大"><Svg w={8} h={8}><path d="M0 4h8M4 0v8" strokeWidth="2" stroke="#555" /></Svg></ZoomButton>
            <Percent>100%</Percent>
          </StatusRight>
        </StatusBar>

        <Pointer width="14" height="20" viewBox="0 0 14 20" aria-hidden="true"><path d="M1 1v15l3.500-3.500L7 18.500l3-1-2.500-6h5z" fill="#fff" stroke="#111" /></Pointer>
        <ImePill>EN<Svg w={12} h={13} crisp={false}><path d="M5 1.500q6 1 5 6t-9 4q5-1 6-4t-2-6z" stroke="#333" /></Svg>简</ImePill>
        <Watermark>
          <svg width="43" height="40" viewBox="0 0 43 40" aria-hidden="true">
            <path d="M41 1C22-2 4 11 1 23q-2 12 12 9 9-2 11-9-6 6-11 5 6-1 8-7-8 1-11 5-3 2-3-3Q10 8 41 1z" fill="#2f86d0" />
            <path d="M41 1C26 2 10 10 7 22 8 12 20 3 41 1z" fill="#5cc0f0" />
            <path d="M20 17q12-6 20-5 4 10-8 19-8 6-19 6-6 1-9-2 18 0 24-8 6-8-8-10z" fill="#4cb86a" />
            <path d="M4 35q10 1 17-2-5 5-8 6-5 0-9-4z" fill="#e8c23c" />
          </svg>
          <div><MarkText>极光下载站</MarkText><MarkUrl>www.xz7.com</MarkUrl></div>
        </Watermark>
      </Workbook>
    </Frame>
  );
}
